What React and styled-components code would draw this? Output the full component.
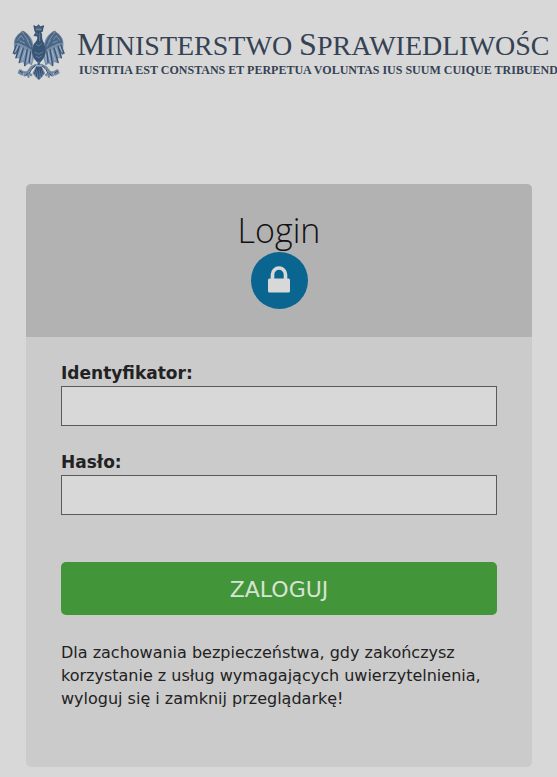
import React, { useState } from "react";
import styled, { createGlobalStyle } from "styled-components";

export default function App() {
  const [login, setLogin] = useState("");
  const [password, setPassword] = useState("");

  const handleSubmit = (event) => {
    event.preventDefault();
  };

  return (
    <>
      <GlobalStyle />
      <Header>
        <Eagle />
        <Brand>
          <Ministry>
            <Initial>M</Initial>inisterstwo <Initial>S</Initial>prawiedliwośc
          </Ministry>
          <Motto>
            Iustitia est constans et perpetua voluntas ius suum cuique tribuend
          </Motto>
        </Brand>
      </Header>
      <Card>
        <CardHeader>
          <Title>Login</Title>
          <LockCircle>
            <LockIcon />
          </LockCircle>
        </CardHeader>
        <Form onSubmit={handleSubmit}>
          <Field>
            <Label htmlFor="login">Identyfikator:</Label>
            <Input
              id="login"
              type="text"
              value={login}
              onChange={(e) => setLogin(e.target.value)}
            />
          </Field>
          <Field>
            <Label htmlFor="password">Hasło:</Label>
            <Input
              id="password"
              type="password"
              value={password}
              onChange={(e) => setPassword(e.target.value)}
            />
          </Field>
          <SubmitButton type="submit">ZALOGUJ</SubmitButton>
          <Notice>
            Dla zachowania bezpieczeństwa, gdy zakończysz korzystanie z usług
            wymagających uwierzytelnienia, wyloguj się i zamknij przeglądarkę!
          </Notice>
        </Form>
      </Card>
    </>
  );
}

function LockIcon() {
  return (
    <svg width="22" height="27" viewBox="0 0 22 27" aria-hidden="true">
      <path
        d="M4.5 13V8.5a6.5 6.5 0 0 1 13 0V13"
        fill="none"
        stroke="#d8d8d8"
        strokeWidth="3.6"
      />
      <rect x="0" y="12.5" width="22" height="14" rx="1.5" fill="#d8d8d8" />
    </svg>
  );
}

// one wing with its leg, the other half is the same group mirrored
function EagleHalf() {
  return (
    <g strokeLinejoin="round" strokeLinecap="round">
      <path
        d="M66 80C63 72 66 60 61 48C57 36 46 26 35 19C24 23 14 32 9 42C4 52 5 66 8 77L2 88L13 91L10 102L22 102L20 118L34 114L38 128L50 118L60 124L67 98Z"
        fill="#7990ad"
      />
      <path
        d="M34 20C22 28 7 40 9 58C16 54 24 57 32 62C42 66 52 72 62 80C64 58 55 34 34 20Z"
        fill="#4a6685"
      />
      <path
        d="M13 62L4 87M22 66L12 101M34 72L22 115M46 76L38 124M56 82L52 115M18 74L8 89"
        fill="none"
        stroke="#3a5573"
        strokeWidth="4"
      />
      <path
        d="M17 68L10 84M29 72L19 98M41 78L31 108M52 82L45 114M60 90L57 114"
        fill="none"
        stroke="#a3b4c9"
        strokeWidth="3"
      />
      <path
        d="M17 48L27 34L36 46M37 32L50 50M24 50L38 56M46 48L56 66"
        fill="none"
        stroke="#7f95af"
        strokeWidth="3"
      />
      <path d="M30 21L35 28" stroke="#8b897d" strokeWidth="4" />
      <path
        d="M72 123L58 130L46 145L31 144M46 145L38 154M46 145L50 158M47 144L58 153M33 144L24 139L21 146L31 151"
        fill="none"
        stroke="#6f87a3"
        strokeWidth="7"
      />
      <path
        d="M70 125L58 137L53 146M31 146L25 142M47 149L42 155"
        fill="none"
        stroke="#2f4965"
        strokeWidth="3"
      />
    </g>
  );
}

function Eagle() {
  return (
    <EagleSvg viewBox="0 0 160 170" role="img" aria-label="Godło">
      <EagleHalf />
      <g transform="translate(161 0) scale(-1 1)">
        <EagleHalf />
      </g>
      <path
        d="M66 4L73 8L80 2L87 8L95 4L91 22H70Z"
        fill="#48617e"
        stroke="#2f4965"
        strokeWidth="3"
      />
      <path d="M73 15H89" stroke="#9aabc0" strokeWidth="2" />
      <path
        d="M71 23C81 18 91 22 91 32C90 41 92 48 97 57L102 79C100 99 93 108 81 119C68 107 60 97 60 79L65 60C73 52 78 46 76 37L65 35Z"
        fill="#385575"
      />
      <path
        d="M72 29H78M83 27C87 33 80 43 84 51M72 60L81 65L90 58M68 84L81 90L94 83M72 96L81 101L90 95"
        fill="none"
        stroke="#7b91ad"
        strokeWidth="2"
      />
      <path
        d="M81 110L73 126L62 148L72 160L81 169L90 160L100 148L89 126Z"
        fill="#637e9e"
      />
      <path
        d="M81 115V165M76 126L68 150M86 126L94 150M78 130L73 158M84 130L89 158"
        fill="none"
        stroke="#2d4866"
        strokeWidth="3"
      />
      <path d="M72 125H90" stroke="#a7b7ca" strokeWidth="4" />
    </EagleSvg>
  );
}

const GlobalStyle = createGlobalStyle`
  * {
    box-sizing: border-box;
  }
  body {
    margin: 0;
    background-color: #d8d8d8;
    color: #222;
    font-family: Verdana, "DejaVu Sans", sans-serif;
    font-size: 16px;
    overflow-x: hidden;
  }
`;

const Header = styled.header`
  display: flex;
  align-items: flex-start;
  gap: 12px;
  padding: 24px 0 0 12px;
  overflow: hidden;
  white-space: nowrap;
`;

const EagleSvg = styled.svg`
  flex: none;
  width: 53px;
  height: 57px;
`;

const Brand = styled.div`
  color: #344254;
  font-family: "Liberation Serif", serif;
  text-transform: uppercase;
`;

const Ministry = styled.div`
  padding-top: 4px;
  font-size: 28px;
  line-height: 35px;
`;

const Initial = styled.span`
  font-size: 32px;
  line-height: 32px;
`;

const Motto = styled.div`
  padding-left: 2px;
  font-size: 12px;
  font-weight: bold;
  line-height: 14px;
`;

const Card = styled.main`
  margin: 103px 25px 10px 26px;
  border-radius: 5px;
  background-color: #cbcbcb;
  overflow: hidden;
`;

const CardHeader = styled.div`
  display: flex;
  flex-direction: column;
  align-items: center;
  padding: 24px 0 28px;
  background-color: #b2b2b2;
`;

const Title = styled.h1`
  margin: 0;
  color: #111;
  font-family: "Open Sans", sans-serif;
  font-size: 34px;
  font-weight: 300;
  line-height: 44px;
`;

const LockCircle = styled.div`
  display: flex;
  align-items: center;
  justify-content: center;
  width: 57px;
  height: 57px;
  padding-bottom: 3px;
  border-radius: 50%;
  background-color: #0a6690;
`;

const Form = styled.form`
  display: flex;
  flex-direction: column;
  padding: 24px 35px 57px;
`;

const Field = styled.div`
  display: flex;
  flex-direction: column;
  margin-bottom: 24px;
`;

const Label = styled.label`
  font-size: 17px;
  font-weight: bold;
  line-height: 25px;
`;

const Input = styled.input`
  width: 100%;
  height: 40px;
  padding: 0 10px;
  border: 1px solid #5a5a5a;
  border-radius: 0;
  background-color: #d8d8d8;
  color: #222;
  font: inherit;
`;

const SubmitButton = styled.button`
  height: 53px;
  margin: 23px 0 26px;
  padding: 2px 0 0;
  border: none;
  border-radius: 5px;
  background-color: #439539;
  color: #d8e3d6;
  font-family: inherit;
  font-size: 22px;
  cursor: pointer;
`;

const Notice = styled.p`
  margin: 0;
  line-height: 23px;
`;
